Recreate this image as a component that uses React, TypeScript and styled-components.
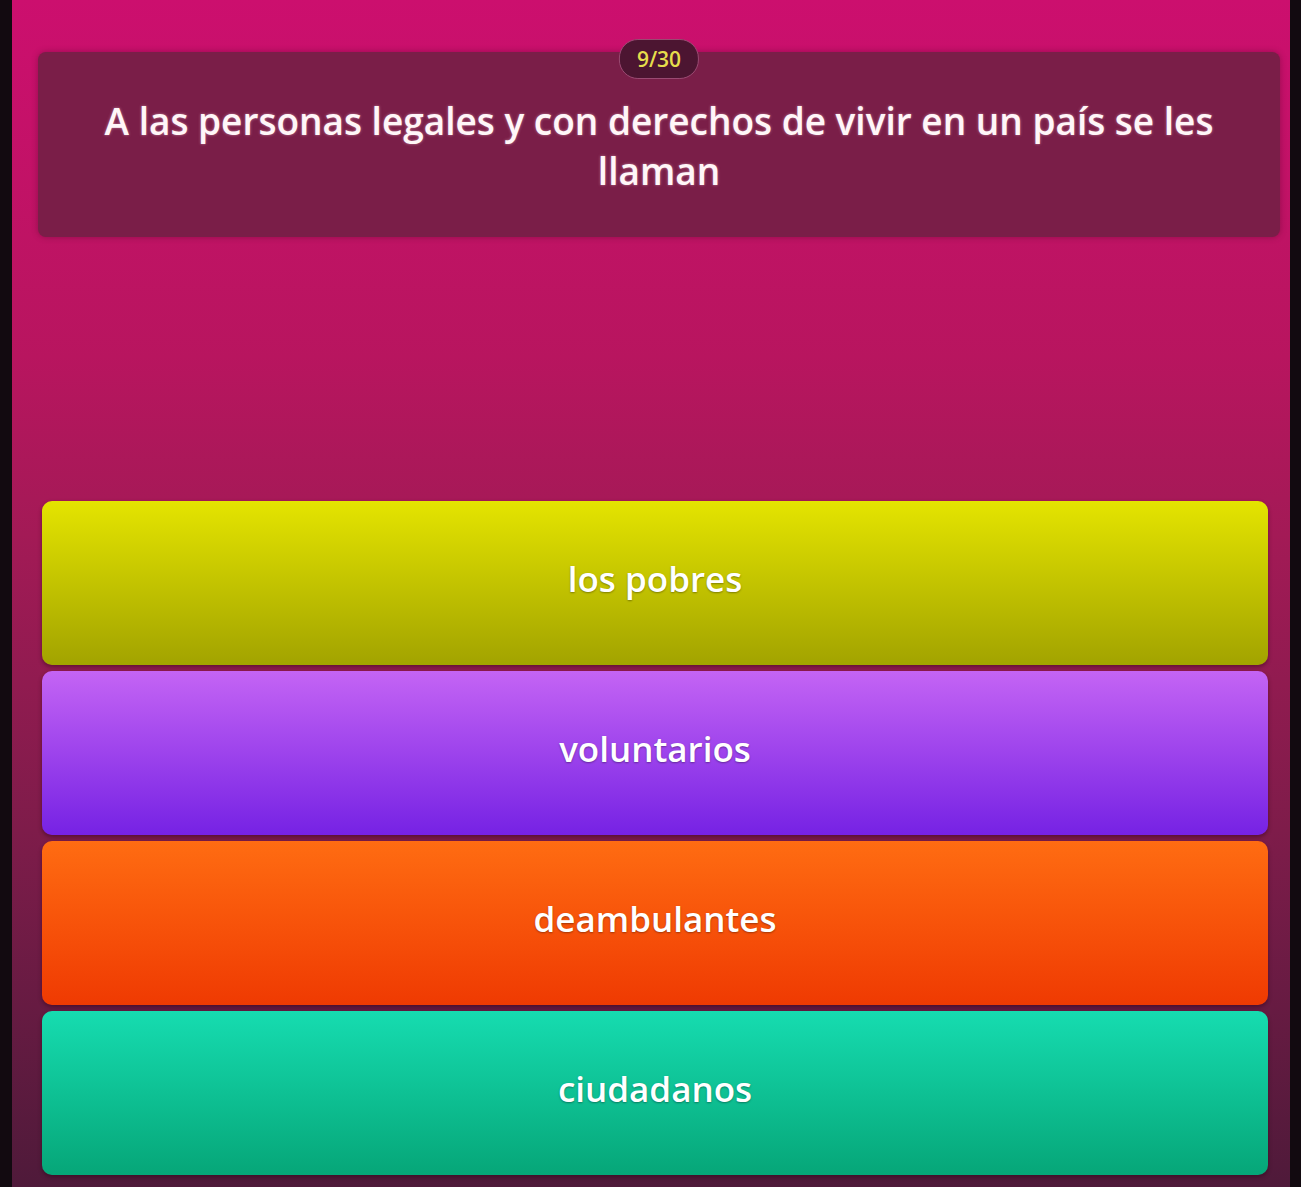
import * as React from 'react';
import styled, { createGlobalStyle } from 'styled-components';

const GlobalStyle = createGlobalStyle`
  html, body {
    margin: 0;
    padding: 0;
    background: #120a10;
  }
  body {
    font-family: 'Open Sans', 'Noto Sans', sans-serif;
  }
`;

interface Option {
  id: string;
  label: string;
  top: string;
  bottom: string;
}

const options: Option[] = [
  { id: 'a', label: 'los pobres', top: '#e4e400', bottom: '#a2a300' },
  { id: 'b', label: 'voluntarios', top: '#c464f4', bottom: '#7622e4' },
  { id: 'c', label: 'deambulantes', top: '#ff6c12', bottom: '#ef3a02' },
  { id: 'd', label: 'ciudadanos', top: '#16dcb0', bottom: '#06a678' },
];

const Screen = styled.div`
  margin: 0 11px 0 12px;
  height: 1187px;
  box-sizing: border-box;
  padding: 40px 0 0;
  background: linear-gradient(
    180deg,
    #cc0f6e 0%,
    #b8155f 30%,
    #a31a56 45%,
    #7e1c4a 70%,
    #4f1a3a 100%
  );
  display: flex;
  flex-direction: column;
  overflow: hidden;
`;

const QuestionCard = styled.div`
  position: relative;
  margin: 12px 10px 0 26px;
  height: 185px;
  border-radius: 8px;
  background: #7a1e48;
  box-shadow: 0 0 6px rgba(60, 0, 30, 0.35);
  display: flex;
  flex-direction: column;
  align-items: center;
  padding-top: 44px;
  box-sizing: border-box;
`;

const Counter = styled.div`
  position: absolute;
  top: -13px;
  left: 50%;
  transform: translateX(-50%);
  height: 38px;
  padding: 0 17px;
  border-radius: 19px;
  background: #4c1531;
  border: 1px solid #9a4a72;
  color: #e6dd4c;
  font-size: 21px;
  font-weight: 600;
  line-height: 38px;
`;

const QuestionText = styled.p`
  margin: 0;
  max-width: 1180px;
  color: #fff6f8;
  font-size: 37px;
  font-weight: 600;
  line-height: 50px;
  text-align: center;
  text-shadow: 0 0 3px rgba(255, 220, 230, 0.5);
`;

const Spacer = styled.div`
  flex: 1;
  min-height: 260px;
`;

const OptionList = styled.div`
  display: flex;
  flex-direction: column;
  gap: 6px;
  margin: 0 22px 12px 30px;
`;

const OptionButton = styled.button<{ $top: string; $bottom: string }>`
  height: 164px;
  border: none;
  border-radius: 10px;
  background: linear-gradient(180deg, ${(p) => p.$top}, ${(p) => p.$bottom});
  box-shadow: 0 2px 4px rgba(40, 0, 20, 0.45);
  color: #ffffff;
  font-family: 'Open Sans', 'Noto Sans', sans-serif;
  font-size: 35px;
  font-weight: 600;
  text-shadow: 0 1px 2px rgba(0, 0, 0, 0.35);
  cursor: pointer;
  display: flex;
  align-items: center;
  justify-content: center;
  padding: 0 0 10px;
`;

export default function App() {
  return (
    <>
      <GlobalStyle />
      <Screen>
        <QuestionCard>
          <Counter>9/30</Counter>
          <QuestionText>
            A las personas legales y con derechos de vivir en un país se les llaman
          </QuestionText>
        </QuestionCard>
        <Spacer />
        <OptionList>
          {options.map((o) => (
            <OptionButton key={o.id} $top={o.top} $bottom={o.bottom}>
              {o.label}
            </OptionButton>
          ))}
        </OptionList>
      </Screen>
    </>
  );
}
